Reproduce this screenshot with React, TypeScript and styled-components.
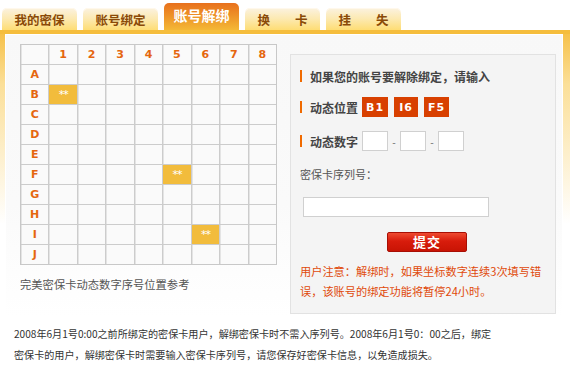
import React from "react";
import styled, { createGlobalStyle } from "styled-components";

const GlobalStyle = createGlobalStyle`
  html, body {
    margin: 0;
    padding: 0;
    background: #ffffff;
  }
  body {
    font-family: "Noto Sans CJK SC", "Liberation Sans", sans-serif;
    color: #333;
  }
`;

const Page = styled.div`
  width: 570px;
`;

const TabBar = styled.div`
  display: flex;
  align-items: flex-end;
  gap: 6px;
  height: 30px;
  padding-left: 2px;
`;

const Tab = styled.div<{ $active?: boolean }>`
  width: 75px;
  height: ${(p) => (p.$active ? 27 : 22)}px;
  box-sizing: border-box;
  border-radius: 5px 5px 0 0;
  display: flex;
  align-items: center;
  justify-content: center;
  gap: ${(p) => (p.$active ? 0 : 25)}px;
  font-weight: bold;
  font-size: ${(p) => (p.$active ? 14 : 12.5)}px;
  padding-bottom: ${(p) => (p.$active ? 3 : 0)}px;
  color: ${(p) => (p.$active ? "#ffffff" : "#8a4a08")};
  background: ${(p) =>
    p.$active
      ? "linear-gradient(to bottom, #e8701c 0%, #ee9428 50%, #f4b836 100%)"
      : "linear-gradient(to bottom, #fbf2e0 0%, #fce9b0 50%, #fedd74 100%)"};
  box-shadow: ${(p) => (p.$active ? "none" : "inset 0 1px 0 #fff8ec")};
`;

const Panel = styled.div`
  border-top: 4px solid #f5bd3c;
  padding: 0 7px 0 5px;
  background: linear-gradient(to bottom, #f6c14a 0%, #fbdf98 50px, rgba(255, 255, 255, 0) 190px);
`;

const Body = styled.div`
  display: flex;
  gap: 13px;
  height: 283px;
  box-sizing: border-box;
  padding: 9px 0 0 14px;
  border: 1px solid #ffffff;
  border-bottom: none;
  background: linear-gradient(to bottom, #f8f8f8 0%, #fafafa 60%, #ffffff 100%);
`;

const LeftColumn = styled.div`
  display: flex;
  flex-direction: column;
`;

const Grid = styled.div`
  width: 257px;
  box-sizing: border-box;
  display: grid;
  grid-template-columns: repeat(9, 1fr);
  grid-auto-rows: 19px;
  gap: 1px;
  border: 1px solid #c8c8c8;
  background: #cccccc;
`;

const Cell = styled.div<{ $marked?: boolean; $label?: boolean }>`
  display: flex;
  align-items: center;
  justify-content: center;
  background: ${(p) => (p.$marked ? "#f2bc3c" : "#fafafa")};
  box-shadow: ${(p) => (p.$marked ? "none" : "inset 1px 0 0 #e4e4e4")};
  color: ${(p) => (p.$marked ? "#ffffff" : "#e5660f")};
  font-family: "DejaVu Sans", "Liberation Sans", sans-serif;
  font-weight: ${(p) => (p.$label ? "bold" : "normal")};
  font-size: 11px;
  letter-spacing: ${(p) => (p.$marked ? "-1px" : "0")};
`;

const Caption = styled.div`
  margin-top: 12px;
  font-size: 11.3px;
  line-height: 14px;
  color: #555;
`;

const Form = styled.div`
  width: 266px;
  height: 260px;
  margin-top: 10px;
  box-sizing: border-box;
  border: 1px solid #e2e2e2;
  background: #f4f4f4;
  padding: 11px 0 0 9px;
  display: flex;
  flex-direction: column;
`;

const FormRow = styled.div<{ $gap: number }>`
  display: flex;
  align-items: center;
  height: 20px;
  margin-top: ${(p) => p.$gap}px;
`;

const Mark = styled.span`
  width: 2px;
  height: 12px;
  background: #f06a00;
  margin-right: 8px;
`;

const Strong = styled.span`
  font-size: 12px;
  font-weight: bold;
  color: #444;
  margin-right: 4px;
`;

const Badges = styled.div`
  display: flex;
  gap: 6px;
`;

const Badge = styled.span`
  height: 20px;
  padding: 0 4px;
  min-width: 24px;
  box-sizing: border-box;
  display: flex;
  align-items: center;
  justify-content: center;
  background: #d84000;
  color: #ffffff;
  font-family: "DejaVu Sans", "Liberation Sans", sans-serif;
  font-weight: bold;
  font-size: 11px;
  letter-spacing: 1px;
`;

const SmallBox = styled.input`
  width: 26px;
  height: 20px;
  box-sizing: border-box;
  border: 1px solid #d0d0d0;
  background: #ffffff;
  padding: 0;
  margin: 0;
  outline: none;
`;

const Dash = styled.span`
  width: 12px;
  text-align: center;
  font-size: 10px;
  color: #666;
`;

const Label = styled.div`
  margin-top: 13px;
  height: 20px;
  line-height: 20px;
  font-size: 11px;
  color: #555;
`;

const SerialInput = styled.input`
  margin: 13px 0 0 3px;
  width: 186px;
  height: 20px;
  box-sizing: border-box;
  border: 1px solid #d0d0d0;
  background: #ffffff;
  padding: 0;
  outline: none;
`;

const SubmitButton = styled.button`
  margin: 15px 0 0 87px;
  width: 80px;
  height: 20px;
  box-sizing: border-box;
  border: 1px solid #a80e04;
  border-radius: 2px;
  background: linear-gradient(to bottom, #ee4a30 0%, #d81c0c 45%, #c81404 100%);
  color: #ffffff;
  font-family: "Noto Sans CJK SC", sans-serif;
  font-weight: bold;
  font-size: 13px;
  line-height: 16px;
  letter-spacing: 1px;
  padding: 0;
  cursor: pointer;
`;

const Warning = styled.p`
  margin: 9px 0 0 0;
  width: 248px;
  font-size: 11.2px;
  line-height: 20px;
  color: #e04a0a;
`;

const Notice = styled.p`
  margin: 6px 0 0 0;
  padding-left: 14px;
  font-size: 10.1px;
  line-height: 21px;
  color: #333;
  white-space: nowrap;
`;

const cols = ["1", "2", "3", "4", "5", "6", "7", "8"];
const rows = ["A", "B", "C", "D", "E", "F", "G", "H", "I", "J"];
const marked = ["B1", "F5", "I6"];
const positions = ["B1", "I6", "F5"];
const tabs = [["我的密保"], ["账号绑定"], ["账号解绑"], ["换", "卡"], ["挂", "失"]];

const CardGrid = () => (
  <Grid>
    <Cell />
    {cols.map((c) => (
      <Cell key={c} $label>
        {c}
      </Cell>
    ))}
    {rows.map((r) => (
      <React.Fragment key={r}>
        <Cell $label>{r}</Cell>
        {cols.map((c) => {
          const on = marked.includes(r + c);
          return (
            <Cell key={c} $marked={on}>
              {on ? "**" : ""}
            </Cell>
          );
        })}
      </React.Fragment>
    ))}
  </Grid>
);

export default function App() {
  return (
    <Page>
      <GlobalStyle />
      <TabBar>
        {tabs.map((t, i) => (
          <Tab key={i} $active={i === 2}>
            {t.map((w) => (
              <span key={w}>{w}</span>
            ))}
          </Tab>
        ))}
      </TabBar>
      <Panel>
        <Body>
          <LeftColumn>
            <CardGrid />
            <Caption>完美密保卡动态数字序号位置参考</Caption>
          </LeftColumn>
          <Form>
            <FormRow $gap={0}>
              <Mark />
              <Strong>如果您的账号要解除绑定，请输入</Strong>
            </FormRow>
            <FormRow $gap={11}>
              <Mark />
              <Strong>动态位置</Strong>
              <Badges>
                {positions.map((m) => (
                  <Badge key={m}>{m}</Badge>
                ))}
              </Badges>
            </FormRow>
            <FormRow $gap={14}>
              <Mark />
              <Strong>动态数字</Strong>
              <SmallBox />
              <Dash>-</Dash>
              <SmallBox />
              <Dash>-</Dash>
              <SmallBox />
            </FormRow>
            <Label>密保卡序列号：</Label>
            <SerialInput />
            <SubmitButton>提交</SubmitButton>
            <Warning>
              用户注意：解绑时，如果坐标数字连续3次填写错误，该账号的绑定功能将暂停24小时。
            </Warning>
          </Form>
        </Body>
      </Panel>
      <Notice>
        2008年6月1号0:00之前所绑定的密保卡用户，解绑密保卡时不需入序列号。2008年6月1号0：00之后，绑定
        <br />
        密保卡的用户，解绑密保卡时需要输入密保卡序列号，请您保存好密保卡信息，以免造成损失。
      </Notice>
    </Page>
  );
}
